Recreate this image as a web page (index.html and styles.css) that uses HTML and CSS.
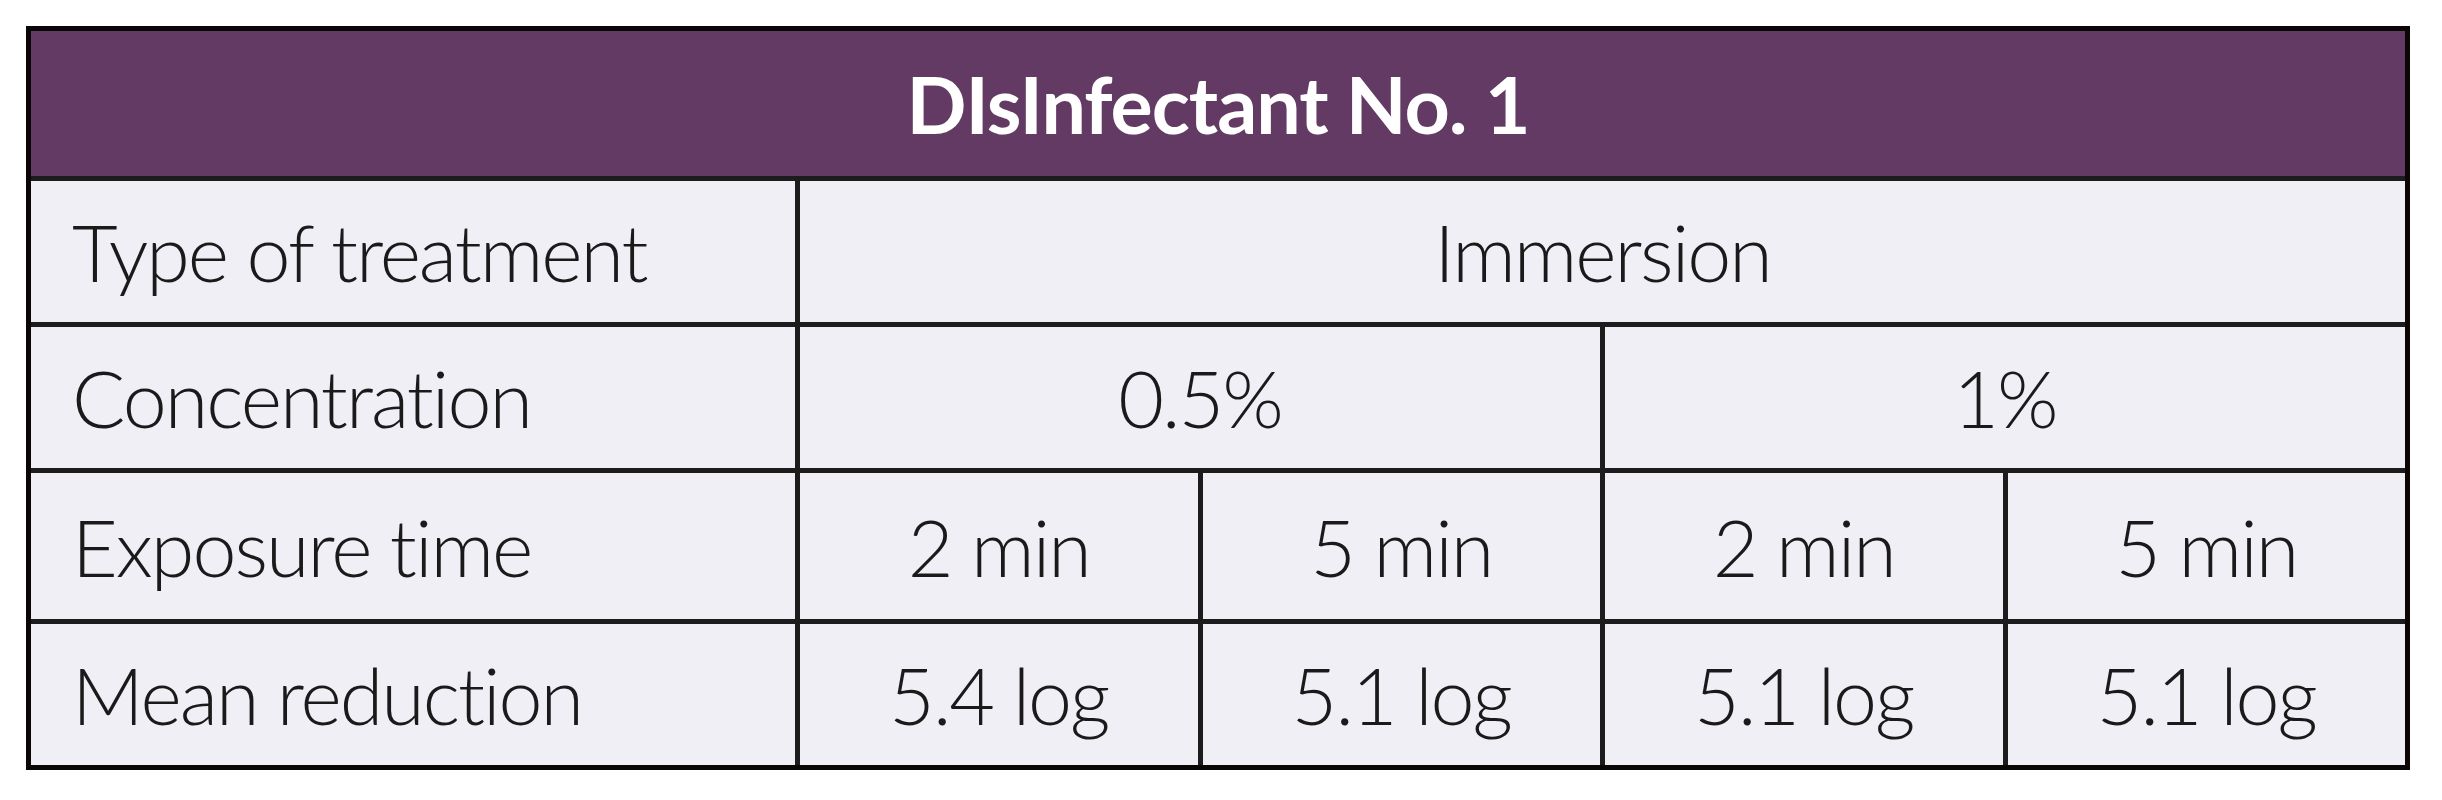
FILE: index.html
```html
<!DOCTYPE html>
<html lang="en">
<head>
<meta charset="utf-8">
<title>Disinfectant No. 1</title>
<link rel="stylesheet" href="styles.css">
</head>
<body>
<div class="table">
  <div class="cell head">DIsInfectant No. 1</div>

  <div class="cell label">Type of treatment</div>
  <div class="cell val span4">Immersion</div>

  <div class="cell label">Concentration</div>
  <div class="cell val span2">0.5%</div>
  <div class="cell val span2">1%</div>

  <div class="cell label">Exposure time</div>
  <div class="cell val">2 min</div>
  <div class="cell val">5 min</div>
  <div class="cell val">2 min</div>
  <div class="cell val">5 min</div>

  <div class="cell label">Mean reduction</div>
  <div class="cell val">5.4 log</div>
  <div class="cell val">5.1 log</div>
  <div class="cell val">5.1 log</div>
  <div class="cell val">5.1 log</div>
</div>
</body>
</html>
```
FILE: styles.css
```css
html, body {
  margin: 0;
  padding: 0;
  background: #ffffff;
}

body {
  font-family: "Lato", "Liberation Sans", sans-serif;
  color: #1a1a1a;
  font-variant-ligatures: none;
  font-feature-settings: "liga" 0, "clig" 0;
}

.table {
  box-sizing: border-box;
  width: 2384px;
  margin: 26px 0 0 26px;
  display: grid;
  grid-template-columns: 764px repeat(4, 1fr);
  grid-template-rows: 145px 141px 141px 146px 141px;
  gap: 5px;
  background: #1c1c1c;
  border: 5px solid #0a0606;
}

.cell {
  display: flex;
  align-items: center;
  background: #f0eff6;
  font-size: 79px;
  font-weight: 300;
  line-height: 1;
  letter-spacing: -2px;
}

.head {
  grid-column: 1 / -1;
  justify-content: center;
  background: #633a63;
  color: #ffffff;
  font-weight: 700;
  letter-spacing: -1px;
}

.label {
  padding-left: 41px;
}

.val {
  justify-content: center;
}

.span4 {
  grid-column: span 4;
}

.span2 {
  grid-column: span 2;
}
```
